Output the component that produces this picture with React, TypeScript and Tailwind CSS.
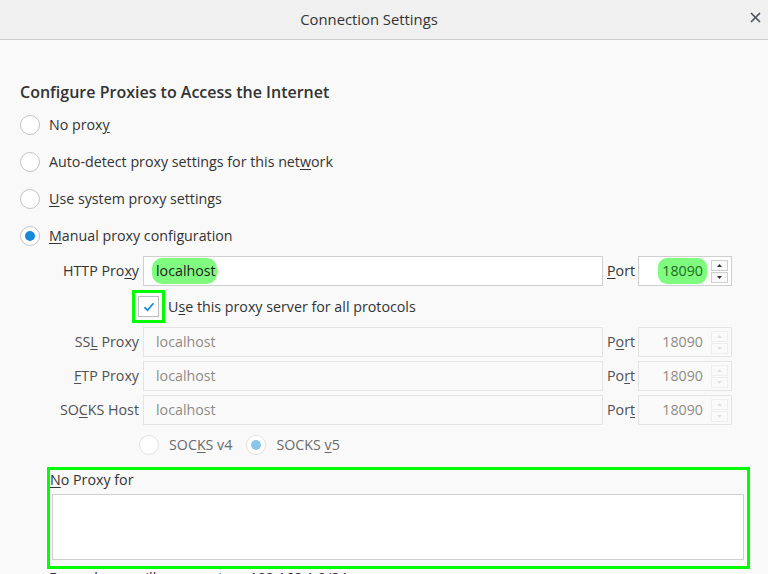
import React from "react";

const font = { fontFamily: '"Open Sans", "Noto Sans", sans-serif' };

function U({ children }: { children: React.ReactNode }) {
  return <span className="underline underline-offset-2 decoration-1">{children}</span>;
}

function Radio({ checked, disabled }: { checked?: boolean; disabled?: boolean }) {
  return (
    <span
      className={
        "flex h-[20px] w-[20px] shrink-0 items-center justify-center rounded-full border bg-white " +
        (disabled ? "border-[#e2e2e2]" : "border-[#c4c4c4]")
      }
    >
      {checked ? (
        <span className={"h-[10px] w-[10px] rounded-full " + (disabled ? "bg-[#8ac6ea]" : "bg-[#1589d8]")} />
      ) : null}
    </span>
  );
}

function Spinner({ disabled }: { disabled?: boolean }) {
  const b = disabled ? "border-[#eeeeee]" : "border-[#cfcfcf]";
  const t = disabled ? "#e0e0e0" : "#333";
  return (
    <div className="flex flex-col gap-[1px]">
      <div className={"flex h-[11px] w-[17px] items-center justify-center border bg-[#fafafa] " + b}>
        <svg width="5" height="3" viewBox="0 0 5 3"><path d="M0 3L2.5 0L5 3Z" fill={t} /></svg>
      </div>
      <div className={"flex h-[11px] w-[17px] items-center justify-center border bg-[#fafafa] " + b}>
        <svg width="5" height="3" viewBox="0 0 5 3"><path d="M0 0L2.5 3L5 0Z" fill={t} /></svg>
      </div>
    </div>
  );
}

function ProxyRow({
  label,
  portLabel,
  host,
  disabled,
}: {
  label: React.ReactNode;
  portLabel: React.ReactNode;
  host: React.ReactNode;
  disabled?: boolean;
}) {
  return (
    <div className="flex h-[30px] items-center">
      <div className={"w-[119px] text-right " + (disabled ? "text-[#505050]" : "text-[#333]")}>{label}</div>
      <div
        className={
          "ml-[4px] flex h-[30px] w-[460px] items-center border pl-[12px] " +
          (disabled ? "border-[#e4e4e4] bg-[#fafafa] text-[#8f8a86]" : "border-[#cfcfcf] bg-white text-[#222]")
        }
      >
        {host}
      </div>
      <div className={"ml-[4px] w-[31px] " + (disabled ? "text-[#505050]" : "text-[#333]")}>{portLabel}</div>
      <div
        className={
          "flex h-[30px] w-[94px] items-center justify-end gap-[8px] border pr-[3px] " +
          (disabled ? "border-[#e4e4e4] bg-[#fafafa] text-[#8f8a86]" : "border-[#cfcfcf] bg-white text-[#1d6b1d]")
        }
      >
        {disabled ? <span>18090</span> : (
          <span className="-mr-[4px] rounded-[9px] bg-[#7ffb7f] px-[4px] py-[2px]">18090</span>
        )}
        <Spinner disabled={disabled} />
      </div>
    </div>
  );
}

export default function App() {
  return (
    <div className="flex h-[574px] w-[768px] flex-col overflow-hidden bg-[#f9f9f9] text-[14.25px] text-[#333]" style={font}>
      <div className="relative flex h-[40px] shrink-0 items-center justify-center border-b border-[#cdcdcd] bg-[#f0f0f0] pr-[30px]">
        <span className="text-[14.8px] text-[#333]">Connection Settings</span>
        <svg className="absolute right-[7px] top-[12px]" width="11" height="11" viewBox="0 0 11 11">
          <path d="M1 1L10 10M10 1L1 10" stroke="#4a5058" strokeWidth="1.6" />
        </svg>
      </div>
      <div className="flex flex-col pl-[20px]">
        <div className="mt-[41px] h-[22px] text-[16px] font-semibold leading-[22px] text-[#333]">
          Configure Proxies to Access the Internet
        </div>
        <div className="mt-[3px] flex flex-col">
          <div className="flex h-[37px] items-center gap-[9px]">
            <Radio />
            <span>No prox<U>y</U></span>
          </div>
          <div className="flex h-[37px] items-center gap-[9px]">
            <Radio />
            <span>Auto-detect proxy settings for this net<U>w</U>ork</span>
          </div>
          <div className="flex h-[37px] items-center gap-[9px]">
            <Radio />
            <span><U>U</U>se system proxy settings</span>
          </div>
          <div className="flex h-[37px] items-center gap-[9px]">
            <Radio checked />
            <span><U>M</U>anual proxy configuration</span>
          </div>
        </div>
        <div className="mt-[2px]">
          <ProxyRow
            label={<span>HTTP Pro<U>x</U>y</span>}
            portLabel={<span><U>P</U>ort</span>}
            host={<span className="-ml-[4px] rounded-[10px] bg-[#80fb80] py-[2px] pl-[4px] pr-[1px]">localhost</span>}
          />
        </div>
        <div className="flex h-[41px] items-center pl-[112px]">
          <div className="flex h-[33px] w-[33px] items-center justify-center border-[3px] border-[#00ff00]">
            <div className="flex h-[21px] w-[21px] items-center justify-center border border-[#bdbdbd] bg-white">
              <svg width="12" height="10" viewBox="0 0 12 10">
                <path d="M1.5 5.2L4.5 8.2L10.5 1.2" stroke="#1589d8" strokeWidth="1.7" fill="none" />
              </svg>
            </div>
          </div>
          <span className="ml-[3px]">U<U>s</U>e this proxy server for all protocols</span>
        </div>
        <div className="flex flex-col gap-[4px]">
          <ProxyRow disabled label={<span>SS<U>L</U> Proxy</span>} portLabel={<span>P<U>o</U>rt</span>} host="localhost" />
          <ProxyRow disabled label={<span><U>F</U>TP Proxy</span>} portLabel={<span>Po<U>r</U>t</span>} host="localhost" />
          <ProxyRow disabled label={<span>SO<U>C</U>KS Host</span>} portLabel={<span>Por<U>t</U></span>} host="localhost" />
        </div>
        <div className="flex h-[39px] items-center pl-[119px] text-[#6a6a6a]">
          <Radio disabled />
          <span className="ml-[10px]">SOC<U>K</U>S v4</span>
          <span className="ml-[14px]"><Radio checked disabled /></span>
          <span className="ml-[10px]">SOCKS <U>v</U>5</span>
        </div>
        <div className="ml-[27px] mt-[3px] h-[102px] w-[703px] shrink-0 border-[3px] border-[#00ff00]">
          <div className="h-[24px] leading-[20px]"><U>N</U>o Proxy for</div>
          <div className="ml-[2px] h-[66px] w-[692px] border border-[#cfcfcf] bg-white" />
        </div>
        <div className="ml-[29px] leading-[18px]">Example: .mozilla.org, .net.nz, 192.168.1.0/24</div>
      </div>
    </div>
  );
}
